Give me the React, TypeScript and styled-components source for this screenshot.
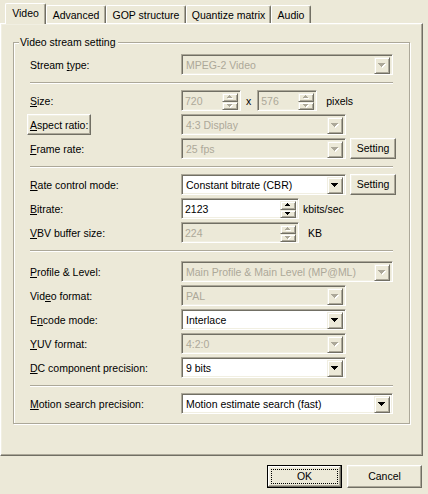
import React from 'react';
import styled, { createGlobalStyle } from 'styled-components';

const FACE = '#ece9d8';
const LIGHT = '#f1efe2';
const SHADOW = '#aca899';
const DARK = '#716f64';

const GlobalStyle = createGlobalStyle`
  html, body {
    margin: 0;
    padding: 0;
    background: ${FACE};
  }
  body {
    font-family: 'Liberation Sans', Arial, sans-serif;
    font-size: 10.5px;
    color: #000;
  }
`;

const Dialog = styled.div`
  width: 428px;
  height: 494px;
  display: flex;
  flex-direction: column;
  background: ${FACE};
`;

const TabStrip = styled.div`
  display: flex;
  align-items: flex-end;
  height: 23px;
  padding-left: 5px;
  box-sizing: border-box;
`;

const Tab = styled.div<{ $w: number; $active?: boolean }>`
  position: relative;
  z-index: ${(p) => (p.$active ? 1 : 0)};
  width: ${(p) => p.$w}px;
  height: ${(p) => (p.$active ? 21 : 18)}px;
  margin-bottom: ${(p) => (p.$active ? -1 : 0)}px;
  box-sizing: border-box;
  display: flex;
  align-items: center;
  justify-content: center;
  padding-bottom: ${(p) => (p.$active ? 2 : 0)}px;
  background: ${FACE};
  border-top: 1px solid #fff;
  border-left: 1px solid #fff;
  border-right: 1px solid ${DARK};
  border-radius: 2px 2px 0 0;
  box-shadow: inset -1px 0 0 ${SHADOW};
  white-space: nowrap;
`;

const Panel = styled.div`
  width: 423px;
  height: 433px;
  box-sizing: border-box;
  border: 1px solid;
  border-color: #fff ${DARK} ${DARK} #fff;
  box-shadow: inset -1px -1px 0 ${SHADOW}, inset 1px 1px 0 ${LIGHT};
  padding: 18px 0 0 12px;
`;

const GroupBox = styled.div`
  position: relative;
  width: 397px;
  box-sizing: border-box;
  border: 1px solid ${SHADOW};
  box-shadow: inset 1px 1px 0 #fff, 1px 1px 0 #fff;
  padding: 11px 16px 9px 16px;
`;

const GroupTitle = styled.span`
  position: absolute;
  top: -7px;
  left: 5px;
  padding: 0 2px 0 1px;
  line-height: 13px;
  background: ${FACE};
`;

const Section = styled.div`
  display: flex;
  flex-direction: column;
  gap: 3px;
`;

const Separator = styled.div<{ $after?: number }>`
  height: 0;
  border-top: 1px solid ${SHADOW};
  border-bottom: 1px solid #fff;
  margin: 7px 0 ${(p) => p.$after ?? 6}px;
`;

const Row = styled.div`
  display: flex;
  align-items: center;
  height: 21px;
`;

const Label = styled.div`
  width: 151px;
  flex-shrink: 0;
  white-space: nowrap;
`;

const LabelButton = styled.span`
  display: inline-flex;
  align-items: center;
  height: 21px;
  box-sizing: border-box;
  margin-left: -3px;
  padding: 0 2px;
  border: 1px solid;
  border-color: #fff ${DARK} ${DARK} #fff;
  box-shadow: inset -1px -1px 0 ${SHADOW}, inset 1px 1px 0 ${LIGHT};
`;

const Sunken = styled.div<{ $w: number; $disabled?: boolean }>`
  display: flex;
  flex-shrink: 0;
  width: ${(p) => p.$w}px;
  height: 21px;
  box-sizing: border-box;
  border: 1px solid;
  border-color: ${SHADOW} #fff #fff ${SHADOW};
  box-shadow: inset 1px 1px 0 ${DARK}, inset -1px -1px 0 ${LIGHT};
  padding: 2px;
  background: ${(p) => (p.$disabled ? FACE : '#fff')};
  color: ${(p) => (p.$disabled ? SHADOW : '#000')};
`;

const FieldText = styled.span<{ $pad?: number }>`
  flex: 1;
  min-width: 0;
  padding-left: ${(p) => p.$pad ?? 1}px;
  line-height: 17px;
  white-space: nowrap;
  overflow: hidden;
`;

const DropButton = styled.div`
  width: 16px;
  height: 17px;
  flex-shrink: 0;
  box-sizing: border-box;
  display: flex;
  align-items: center;
  justify-content: center;
  border: 1px solid;
  border-color: ${LIGHT} ${DARK} ${DARK} ${LIGHT};
  box-shadow: inset 1px 1px 0 #fff, inset -1px -1px 0 ${SHADOW};
  background: ${FACE};
`;

const SpinButtons = styled.div`
  width: 16px;
  height: 17px;
  flex-shrink: 0;
  display: flex;
  flex-direction: column;
`;

const SpinHalf = styled(DropButton)`
  height: auto;
  flex: 1;
`;

const After = styled.span<{ $gap: number }>`
  margin-left: ${(p) => p.$gap}px;
  white-space: nowrap;
`;

const Times = styled.span`
  margin: 0 6px 0 5px;
`;

const PushButton = styled.button<{ $w: number; $h?: number; $default?: boolean }>`
  position: relative;
  flex-shrink: 0;
  width: ${(p) => p.$w}px;
  height: ${(p) => p.$h ?? 21}px;
  box-sizing: border-box;
  padding: 0 0 1px;
  font: inherit;
  color: #000;
  background: ${FACE};
  border: 1px solid;
  border-color: ${(p) => (p.$default ? '#000' : `#fff ${DARK} ${DARK} #fff`)};
  box-shadow: ${(p) =>
    p.$default
      ? `inset -1px -1px 0 ${DARK}, inset 1px 1px 0 #fff, inset -2px -2px 0 ${SHADOW}, inset 2px 2px 0 ${LIGHT}`
      : `inset -1px -1px 0 ${SHADOW}, inset 1px 1px 0 ${LIGHT}`};
`;

const Focus = styled.span`
  position: absolute;
  inset: 3px;
  border: 1px dotted #000;
`;

const ButtonBar = styled.div`
  display: flex;
  justify-content: flex-end;
  gap: 5px;
  margin-top: 9px;
  padding-right: 6px;
`;

const Arrow = ({ disabled, up, small }: { disabled?: boolean; up?: boolean; small?: boolean }) => {
  const d = small
    ? up
      ? 'M2 0h1v1H2z M1 1h3v1H1z M0 2h5v1H0z'
      : 'M0 0h5v1H0z M1 1h3v1H1z M2 2h1v1H2z'
    : 'M0 0h7v1H0z M1 1h5v1H1z M2 2h3v1H2z M3 3h1v1H3z';
  const w = small ? 6 : 8;
  const h = small ? 4 : 5;
  return (
    <svg width={w} height={h} viewBox={`0 0 ${w} ${h}`} shapeRendering="crispEdges">
      {disabled && <path d={d} fill="#fff" transform="translate(1 1)" />}
      <path d={d} fill={disabled ? SHADOW : '#000'} />
    </svg>
  );
};

const Combo = ({ value, w, disabled }: { value: string; w: number; disabled?: boolean }) => (
  <Sunken $w={w} $disabled={disabled}>
    <FieldText $pad={2}>{value}</FieldText>
    <DropButton>
      <Arrow disabled={disabled} />
    </DropButton>
  </Sunken>
);

const Spin = ({ value, w, disabled }: { value: string; w: number; disabled?: boolean }) => (
  <Sunken $w={w} $disabled={disabled}>
    <FieldText>{value}</FieldText>
    <SpinButtons>
      <SpinHalf>
        <Arrow small up disabled={disabled} />
      </SpinHalf>
      <SpinHalf>
        <Arrow small disabled={disabled} />
      </SpinHalf>
    </SpinButtons>
  </Sunken>
);

const App = () => (
  <>
    <GlobalStyle />
    <Dialog>
      <TabStrip>
        <Tab $w={41} $active>Video</Tab>
        <Tab $w={60}>Advanced</Tab>
        <Tab $w={80}>GOP structure</Tab>
        <Tab $w={85}>Quantize matrix</Tab>
        <Tab $w={40}>Audio</Tab>
      </TabStrip>
      <Panel>
        <GroupBox>
          <GroupTitle>Video stream setting</GroupTitle>

          <Section>
            <Row>
              <Label>
                Stream <u>t</u>ype:
              </Label>
              <Combo value="MPEG-2 Video" w={212} disabled />
            </Row>
          </Section>
          <Separator />

          <Section>
            <Row>
              <Label>
                <u>S</u>ize:
              </Label>
              <Spin value="720" w={60} disabled />
              <Times>x</Times>
              <Spin value="576" w={60} disabled />
              <After $gap={9}>pixels</After>
            </Row>
            <Row>
              <Label>
                <LabelButton>
                  <u>A</u>spect ratio:
                </LabelButton>
              </Label>
              <Combo value="4:3 Display" w={165} disabled />
            </Row>
            <Row>
              <Label>
                <u>F</u>rame rate:
              </Label>
              <Combo value="25 fps" w={165} disabled />
              <After $gap={4}>
                <PushButton $w={46}>Setting</PushButton>
              </After>
            </Row>
          </Section>
          <Separator />

          <Section>
            <Row>
              <Label>
                <u>R</u>ate control mode:
              </Label>
              <Combo value="Constant bitrate (CBR)" w={165} />
              <After $gap={4}>
                <PushButton $w={46}>Setting</PushButton>
              </After>
            </Row>
            <Row>
              <Label>
                <u>B</u>itrate:
              </Label>
              <Spin value="2123" w={118} />
              <After $gap={4}>kbits/sec</After>
            </Row>
            <Row>
              <Label>
                <u>V</u>BV buffer size:
              </Label>
              <Spin value="224" w={118} disabled />
              <After $gap={9}>KB</After>
            </Row>
          </Section>
          <Separator $after={9} />

          <Section>
            <Row>
              <Label>
                <u>P</u>rofile &amp; Level:
              </Label>
              <Combo value="Main Profile & Main Level (MP@ML)" w={212} disabled />
            </Row>
            <Row>
              <Label>
                Vid<u>e</u>o format:
              </Label>
              <Combo value="PAL" w={165} disabled />
            </Row>
            <Row>
              <Label>
                E<u>n</u>code mode:
              </Label>
              <Combo value="Interlace" w={165} />
            </Row>
            <Row>
              <Label>
                <u>Y</u>UV format:
              </Label>
              <Combo value="4:2:0" w={165} disabled />
            </Row>
            <Row>
              <Label>
                <u>D</u>C component precision:
              </Label>
              <Combo value="9 bits" w={165} />
            </Row>
          </Section>
          <Separator />

          <Section>
            <Row>
              <Label>
                <u>M</u>otion search precision:
              </Label>
              <Combo value="Motion estimate search (fast)" w={212} />
            </Row>
          </Section>
        </GroupBox>
      </Panel>
      <ButtonBar>
        <PushButton $w={75} $h={23} $default>
          <Focus />
          OK
        </PushButton>
        <PushButton $w={75} $h={23}>
          Cancel
        </PushButton>
      </ButtonBar>
    </Dialog>
  </>
);

export default App;
